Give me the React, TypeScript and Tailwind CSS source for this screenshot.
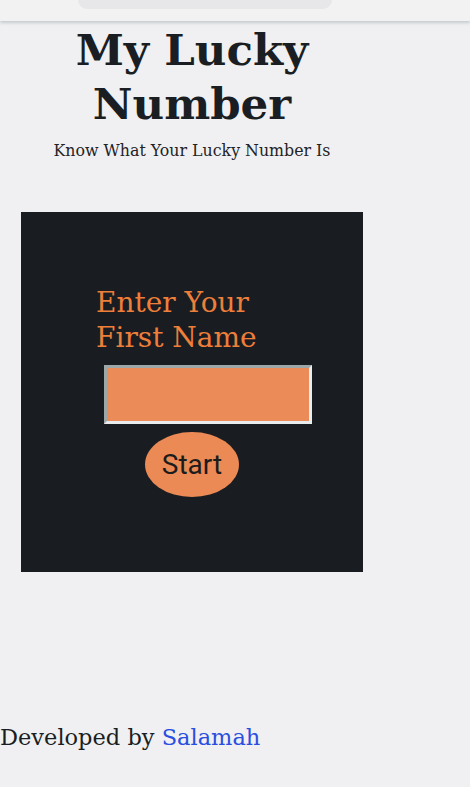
import React from 'react';

const App = () => {
  return (
    <div className="min-h-[787px] w-[470px] bg-[#f0f0f2] overflow-hidden" style={{ fontFamily: '"DejaVu Serif", "Liberation Serif", serif' }}>
      {/* top bar */}
      <div className="h-[21px] bg-[#f2f2f3] shadow-[0_2px_3px_rgba(120,135,140,0.35)] relative">
        <div className="ml-[78px] w-[254px] h-[9px] bg-[#e7e7e9] rounded-b-[20px]"></div>
      </div>

      <div className="w-[384px]">
        <h1 className="mt-[2px] text-center text-[43.5px] leading-[54px] font-bold text-[#1a1e22]">
          My Lucky
          <br />
          Number
        </h1>
        <p className="mt-[10px] text-center text-[15.8px] leading-[20px] text-[#1f2326]">Know What Your Lucky Number Is</p>

        <div className="ml-[21px] mt-[51px] w-[342px] h-[360px] bg-[#191d21] pt-[73px]">
          <div className="ml-[75px] text-[28px] leading-[35px] text-[#ee7f3a]">
            Enter Your
            <br />
            First Name
          </div>
          <div className="ml-[83px] mt-[10px] w-[208px] h-[59px] border-[3px] border-t-[#9ea7a8] border-l-[#9ea7a8] border-b-[#e8ecec] border-r-[#e8ecec] bg-[#ea8b58]"></div>
          <div className="flex justify-center mt-[8px]">
            <button className="w-[94px] h-[65px] rounded-[50%] bg-[#eb8a54] text-[#1c1c1c] text-[28px] leading-none" style={{ fontFamily: 'Roboto, sans-serif' }}>
              Start
            </button>
          </div>
        </div>
      </div>

      <div className="mt-[150px] text-[22.5px] leading-[30px] text-[#1a1e22]">
        Developed by <span className="text-[#2a4fe0]">Salamah</span>
      </div>
    </div>
  );
};

export default App;
